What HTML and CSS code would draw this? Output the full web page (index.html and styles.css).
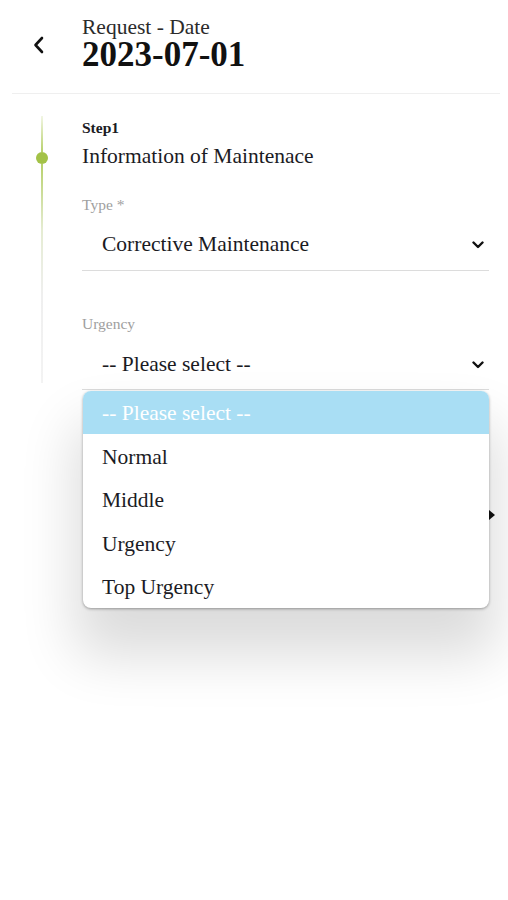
FILE: index.html
```html
<!DOCTYPE html>
<html lang="en">
<head>
<meta charset="utf-8">
<title>Request</title>
<link rel="stylesheet" href="styles.css">
</head>
<body>
<div class="page">
  <header class="header">
    <button class="back" aria-label="Back">
      <svg width="14" height="18" viewBox="0 0 14 18"><path d="M10 2 L3.5 9 L10 16" fill="none" stroke="#111" stroke-width="2.6" stroke-linecap="round" stroke-linejoin="round"/></svg>
    </button>
    <div class="titles">
      <div class="title">Request - Date</div>
      <div class="date">2023-07-01</div>
    </div>
  </header>
  <div class="divider"></div>
  <section class="steps">
    <div class="rail">
      <div class="seg seg-top"></div>
      <div class="dot"></div>
      <div class="seg seg-bottom"></div>
    </div>
    <div class="form">
      <div class="step-no">Step1</div>
      <div class="step-title">Information of Maintenace</div>
      <div class="field field-type">
        <div class="label">Type *</div>
        <div class="select">
          <span>Corrective Maintenance</span>
          <svg class="chev" width="12" height="8" viewBox="0 0 12 8"><path d="M1.5 1.5 L6 6 L10.5 1.5" fill="none" stroke="#111" stroke-width="2.4" stroke-linecap="round" stroke-linejoin="round"/></svg>
        </div>
      </div>
      <div class="field field-urgency">
        <div class="label">Urgency</div>
        <div class="select">
          <span>-- Please select --</span>
          <svg class="chev" width="12" height="8" viewBox="0 0 12 8"><path d="M1.5 1.5 L6 6 L10.5 1.5" fill="none" stroke="#111" stroke-width="2.4" stroke-linecap="round" stroke-linejoin="round"/></svg>
        </div>
        <div class="caret"></div>
        <ul class="menu">
          <li class="opt active">-- Please select --</li>
          <li class="opt">Normal</li>
          <li class="opt">Middle</li>
          <li class="opt">Urgency</li>
          <li class="opt">Top Urgency</li>
        </ul>
      </div>
    </div>
  </section>
</div>
</body>
</html>
```
FILE: styles.css
```css
html, body {
  margin: 0;
  padding: 0;
  background: #fff;
}
body {
  font-family: "Liberation Serif", "Times New Roman", serif;
  color: #1b1b1f;
  width: 508px;
  height: 900px;
  overflow: hidden;
}
.page {
  width: 508px;
}
.header {
  display: flex;
  align-items: flex-start;
  padding: 17px 0 21px 0;
}
.back {
  border: 0;
  background: none;
  padding: 0;
  margin: 19px 0 0 32px;
  width: 14px;
  height: 18px;
  display: flex;
}
.titles {
  margin-left: 36px;
  display: flex;
  flex-direction: column;
}
.title {
  font-size: 21.5px;
  line-height: 21.5px;
  color: #2b2b2b;
}
.date {
  font-size: 35px;
  font-weight: bold;
  line-height: 35px;
  margin-top: -1.5px;
  color: #111;
}
.divider {
  margin: 0 8px 0 12px;
  border-top: 1px solid #efefef;
}
.steps {
  display: flex;
  padding-top: 22px;
}
.rail {
  width: 12px;
  margin-left: 36px;
  margin-right: 34px;
  display: flex;
  flex-direction: column;
  align-items: center;
}
.seg {
  width: 2px;
}
.seg-top {
  height: 36px;
  background: linear-gradient(#f2f6e4, #b8d16c);
}
.dot {
  width: 12px;
  height: 12px;
  border-radius: 50%;
  background: #a3c247;
}
.seg-bottom {
  height: 219px;
  background: linear-gradient(#b8d16c 0%, #e5ecd2 30%, #efefef 60%, #f3f3f3 100%);
}
.form {
  width: 407px;
}
.step-no {
  font-size: 15.5px;
  font-weight: bold;
  line-height: 18px;
  padding-top: 3px;
  color: #1b1b24;
}
.step-title {
  font-size: 21.5px;
  line-height: 26px;
  margin-top: 6px;
  color: #1b1b24;
}
.field-type {
  margin-top: 27px;
}
.field-urgency {
  margin-top: 44px;
  position: relative;
}
.label {
  font-size: 15.5px;
  line-height: 18px;
  color: #a0a0a0;
}
.select {
  display: flex;
  align-items: center;
  justify-content: space-between;
  font-size: 21.5px;
  line-height: 26px;
  padding: 16.6px 5px 13.4px 20px;
  border-bottom: 1px solid #dcdcdc;
}
.field-urgency .select {
  padding-top: 17.6px;
  padding-bottom: 12.4px;
}
.chev {
  margin-top: 2px;
}
.caret {
  position: absolute;
  left: 407px;
  top: 195px;
  width: 0;
  height: 0;
  border-top: 5px solid transparent;
  border-bottom: 5px solid transparent;
  border-left: 6px solid #111;
}
.menu {
  position: absolute;
  left: 1px;
  top: 76px;
  width: 406px;
  margin: 0;
  padding: 0;
  list-style: none;
  background: #fff;
  border-radius: 8px;
  overflow: hidden;
  box-shadow: 0 1px 3px rgba(0, 0, 0, 0.35), 0 40px 55px 8px rgba(0, 0, 0, 0.14);
}
.opt {
  font-size: 21.5px;
  line-height: 24px;
  padding: 10.5px 19px 8.9px 19px;
  color: #1b1b24;
}
.opt.active {
  background: #a9def4;
  color: #fff;
}
```
